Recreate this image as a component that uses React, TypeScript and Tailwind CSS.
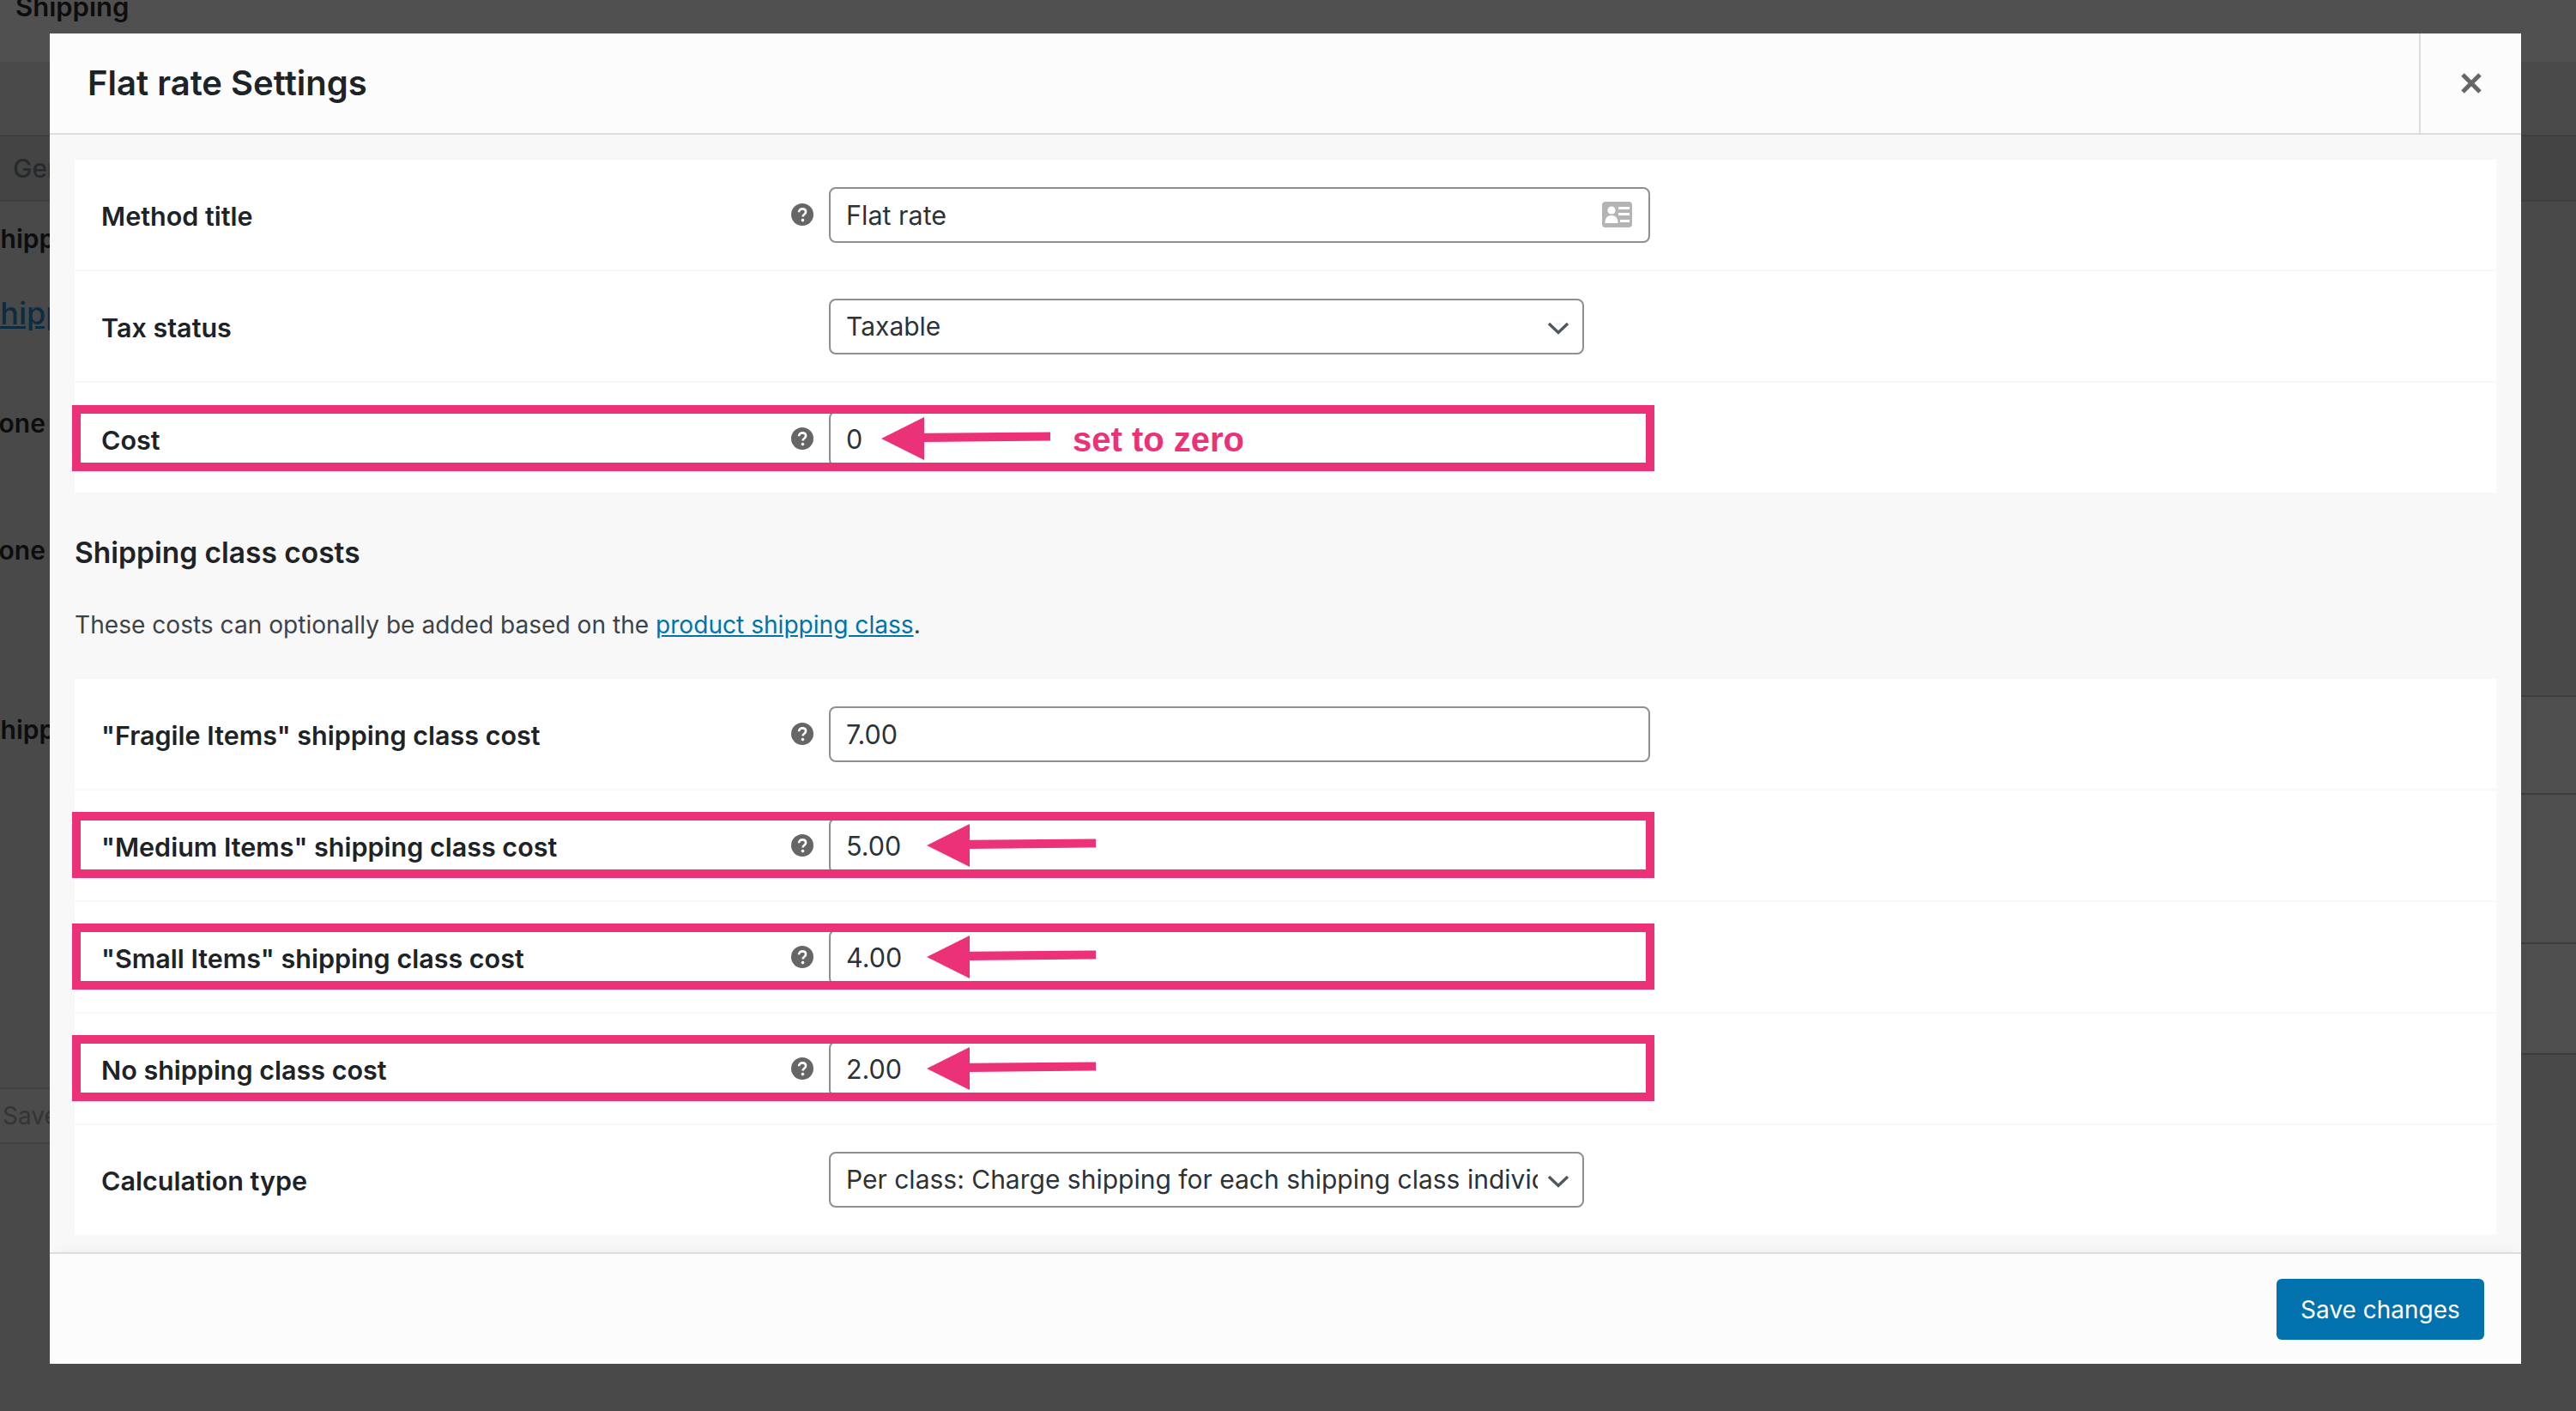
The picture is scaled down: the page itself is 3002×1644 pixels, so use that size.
import type { ReactElement, ReactNode } from "react";

// ── icons ─────────────────────────────────────────────────────────────────────

function HelpIcon(): ReactElement {
  return (
    <svg width="26" height="26" viewBox="0 0 26 26" className="shrink-0">
      <circle cx="13" cy="13" r="13" fill="#666666" />
      <path
        d="M9 10.2c0-2.4 1.8-3.8 4.1-3.8 2.3 0 4 1.3 4 3.4 0 1.6-.9 2.400-2 3.200-1 .7-1.500 1.200-1.500 2.400"
        fill="none"
        stroke="#ffffff"
        strokeWidth="2.6"
      />
      <circle cx="13.5" cy="19.6" r="1.8" fill="#ffffff" />
    </svg>
  );
}

function Chevron(): ReactElement {
  return (
    <svg
      width="26"
      height="16"
      viewBox="0 0 26 16"
      className="absolute right-[17px] top-[26px]"
    >
      <path d="M2 3l11 10.5L24 3" fill="none" stroke="#50575e" strokeWidth="3.4" />
    </svg>
  );
}

function ContactCard(): ReactElement {
  return (
    <svg
      width="35"
      height="30"
      viewBox="0 0 35 30"
      className="absolute right-[21px] top-[17px]"
    >
      <rect width="35" height="30" rx="4" fill="#b4b4b4" />
      <circle cx="11" cy="10" r="4.6" fill="#ffffff" />
      <path d="M3.5 25c0-6 2.5-9 7.5-9s7.5 3 7.5 9z" fill="#ffffff" />
      <path d="M19 6h13v3H19zM19 13h13v3H19zM21 21h11v3H21z" fill="#ffffff" />
    </svg>
  );
}

function Arrow({ className }: { className: string }): ReactElement {
  return (
    <svg
      width="197"
      height="50"
      viewBox="0 0 197 50"
      className={`absolute top-[14px] ${className}`}
    >
      <path d="M0 25L50 0v18.800L197 17.500v10L50 29v21z" fill="#eb3278" />
    </svg>
  );
}

// ── form rows ─────────────────────────────────────────────────────────────────

interface RowProps {
  label: string;
  help?: boolean;
  children: ReactNode;
  // last row of a table has no separator, the classes say how it sits
  lastClass?: string;
}

function Row({ label, help, children, lastClass }: RowProps): ReactElement {
  return (
    <div
      className={`relative flex items-center bg-white ${
        lastClass ?? "h-[130px] border-b-2 border-[#f8f8f8]"
      }`}
    >
      <div className="flex w-[879px] shrink-0 items-center justify-between pl-[31px] pr-[18px]">
        <span className="pt-[3px] text-[30.5px] font-semibold text-[#1d2327]">{label}</span>
        {help && <HelpIcon />}
      </div>
      {children}
    </div>
  );
}

function TextBox({ value, wide }: { value: string; wide?: boolean }): ReactElement {
  return (
    <div className="relative h-[65px] w-[957px]">
      <input
        readOnly
        value={value}
        className="h-full w-full rounded-[8px] border-2 border-[#8c8f94] bg-white px-[18px] text-[30.5px] text-[#2c3338]"
      />
      {wide && <ContactCard />}
    </div>
  );
}

function SelectBox({ value }: { value: string }): ReactElement {
  return (
    <div className="relative h-[65px] w-[880px]">
      <div className="flex h-full items-center overflow-hidden rounded-[8px] border-2 border-[#8c8f94] bg-white pl-[18px] pr-[52px] text-[30px] text-[#2c3338]">
        <span className="block overflow-hidden whitespace-nowrap">{value}</span>
      </div>
      <Chevron />
    </div>
  );
}

// pink box drawn on top of the screenshot, sticks out of the row a little
function Callout({
  arrow,
  top,
  children,
}: {
  arrow: string;
  top: string;
  children?: ReactNode;
}): ReactElement {
  return (
    <div
      className={`pointer-events-none absolute left-[-3px] h-[77px] w-[1844px] border-[10px] border-[#eb3278] ${top}`}
    >
      <div className="relative -left-[10px] -top-[10px]">
        <Arrow className={arrow} />
        {children}
      </div>
    </div>
  );
}

// ── page behind the modal ─────────────────────────────────────────────────────

function BackgroundPage(): ReactElement {
  return (
    <div className="flex h-[1644px] flex-col bg-[#494949] text-[#0d0d0d]">
      <div className="h-[72px] overflow-hidden bg-[#505050] pl-[18px] text-[31px] font-semibold leading-[40px]">
        <div className="-mt-[12px]">Shipping</div>
      </div>
      <div className="h-[85px] bg-[#4a4a4a]" />
      <div className="flex h-[78px] items-center border-y-2 border-[#3f3f3f] bg-[#444444] pl-[15px] text-[30px] font-medium text-[#262a2d]">
        General
      </div>
      <div className="flex min-h-0 flex-1">
        <div className="flex w-[1000px] flex-col text-[30px] font-semibold">
          <div className="flex h-[86px] items-center -ml-[19px]">Shipping zones</div>
          <div className="flex h-[88px] items-center -ml-[23px] text-[36px] font-medium text-[#0c2c42] underline">
            Shipping zones
          </div>
          <div className="flex h-[168px] items-center -ml-[21px]">Zone name</div>
          <div className="flex h-[128px] items-center -ml-[21px]">Zone regions</div>
          <div className="flex h-[290px] items-center -ml-[19px]">Shipping methods</div>
          <div className="h-[272px]" />
          <div className="flex h-[66px] items-center border-y-2 border-[#414141] bg-[#4b4b4b] pl-[3px] text-[28px] font-normal text-[#343434]">
            Save changes
          </div>
        </div>
        <div className="flex flex-1 flex-col pt-[575px]">
          <div className="h-[116px] border-y-2 border-[#3d3d3d] bg-[#4e4e4e]" />
          <div className="h-[174px] border-b-2 border-[#3d3d3d] bg-[#4e4e4e]" />
          <div className="h-[129px] border-b-2 border-[#3d3d3d] bg-[#4e4e4e]" />
        </div>
      </div>
    </div>
  );
}

// ── modal ─────────────────────────────────────────────────────────────────────

function Modal(): ReactElement {
  return (
    <div className="absolute left-[58px] top-[39px] flex h-[1550px] w-[2880px] flex-col bg-[#f8f8f8]">
      <div className="flex h-[118px] shrink-0 items-stretch border-b-2 border-[#dddddd] bg-[#fcfcfc]">
        <h1 className="flex flex-1 items-center pl-[44px] text-[40px] font-semibold text-[#1d2327]">
          Flat rate Settings
        </h1>
        <div className="flex w-[119px] items-center justify-center border-l-2 border-[#dddddd]">
          <svg width="24" height="24" viewBox="0 0 24 24">
            <path d="M2 2l20 20M22 2L2 22" stroke="#666666" strokeWidth="5" />
          </svg>
        </div>
      </div>

      <div className="min-h-0 flex-1 px-[29px] pt-[29px]">
        <div className="flex flex-col">
          <Row label="Method title" help>
            <TextBox value="Flat rate" wide />
          </Row>
          <Row label="Tax status">
            <SelectBox value="Taxable" />
          </Row>
          <Row label="Cost" help lastClass="h-[128px] pt-[2px]">
            <TextBox value="0" />
            <Callout arrow="left-[943px]" top="top-[26px]">
              <span className="absolute left-[1166px] top-[13px] font-['Liberation_Sans',sans-serif] text-[40px] font-bold leading-[54px] text-[#eb3278]">
                set to zero
              </span>
            </Callout>
          </Row>
        </div>

        <h2 className="mt-[48px] text-[33.5px] font-semibold leading-[44px] text-[#1d2327]">
          Shipping class costs
        </h2>
        <p className="mt-[42px] text-[28.1px] leading-[40px] text-[#3c434a]">
          These costs can optionally be added based on the{" "}
          <a className="text-[#0073aa] underline">product shipping class</a>.
        </p>

        <div className="mt-[43px] flex flex-col">
          <Row label={'"Fragile Items" shipping class cost'} help>
            <TextBox value="7.00" />
          </Row>
          <Row label={'"Medium Items" shipping class cost'} help>
            <TextBox value="5.00" />
            <Callout arrow="left-[996px]" top="top-[25px]" />
          </Row>
          <Row label={'"Small Items" shipping class cost'} help>
            <TextBox value="4.00" />
            <Callout arrow="left-[996px]" top="top-[25px]" />
          </Row>
          <Row label="No shipping class cost" help>
            <TextBox value="2.00" />
            <Callout arrow="left-[996px]" top="top-[25px]" />
          </Row>
          <Row label="Calculation type" lastClass="h-[128px] pb-[2px]">
            <SelectBox value="Per class: Charge shipping for each shipping class individually" />
          </Row>
        </div>
      </div>

      <div className="flex h-[130px] shrink-0 items-start justify-end border-t-2 border-[#dddddd] bg-[#fcfcfc] pr-[43px] pt-[29px] shadow-[0_-8px_12px_-8px_rgba(0,0,0,0.06)]">
        <button className="h-[71px] w-[242px] rounded-[6px] bg-[#0172ae] text-[28px] text-white">
          Save changes
        </button>
      </div>
    </div>
  );
}

export default function App(): ReactElement {
  return (
    <div className="relative h-[1644px] w-[3002px] overflow-hidden font-['Inter',sans-serif]">
      <BackgroundPage />
      <Modal />
    </div>
  );
}
